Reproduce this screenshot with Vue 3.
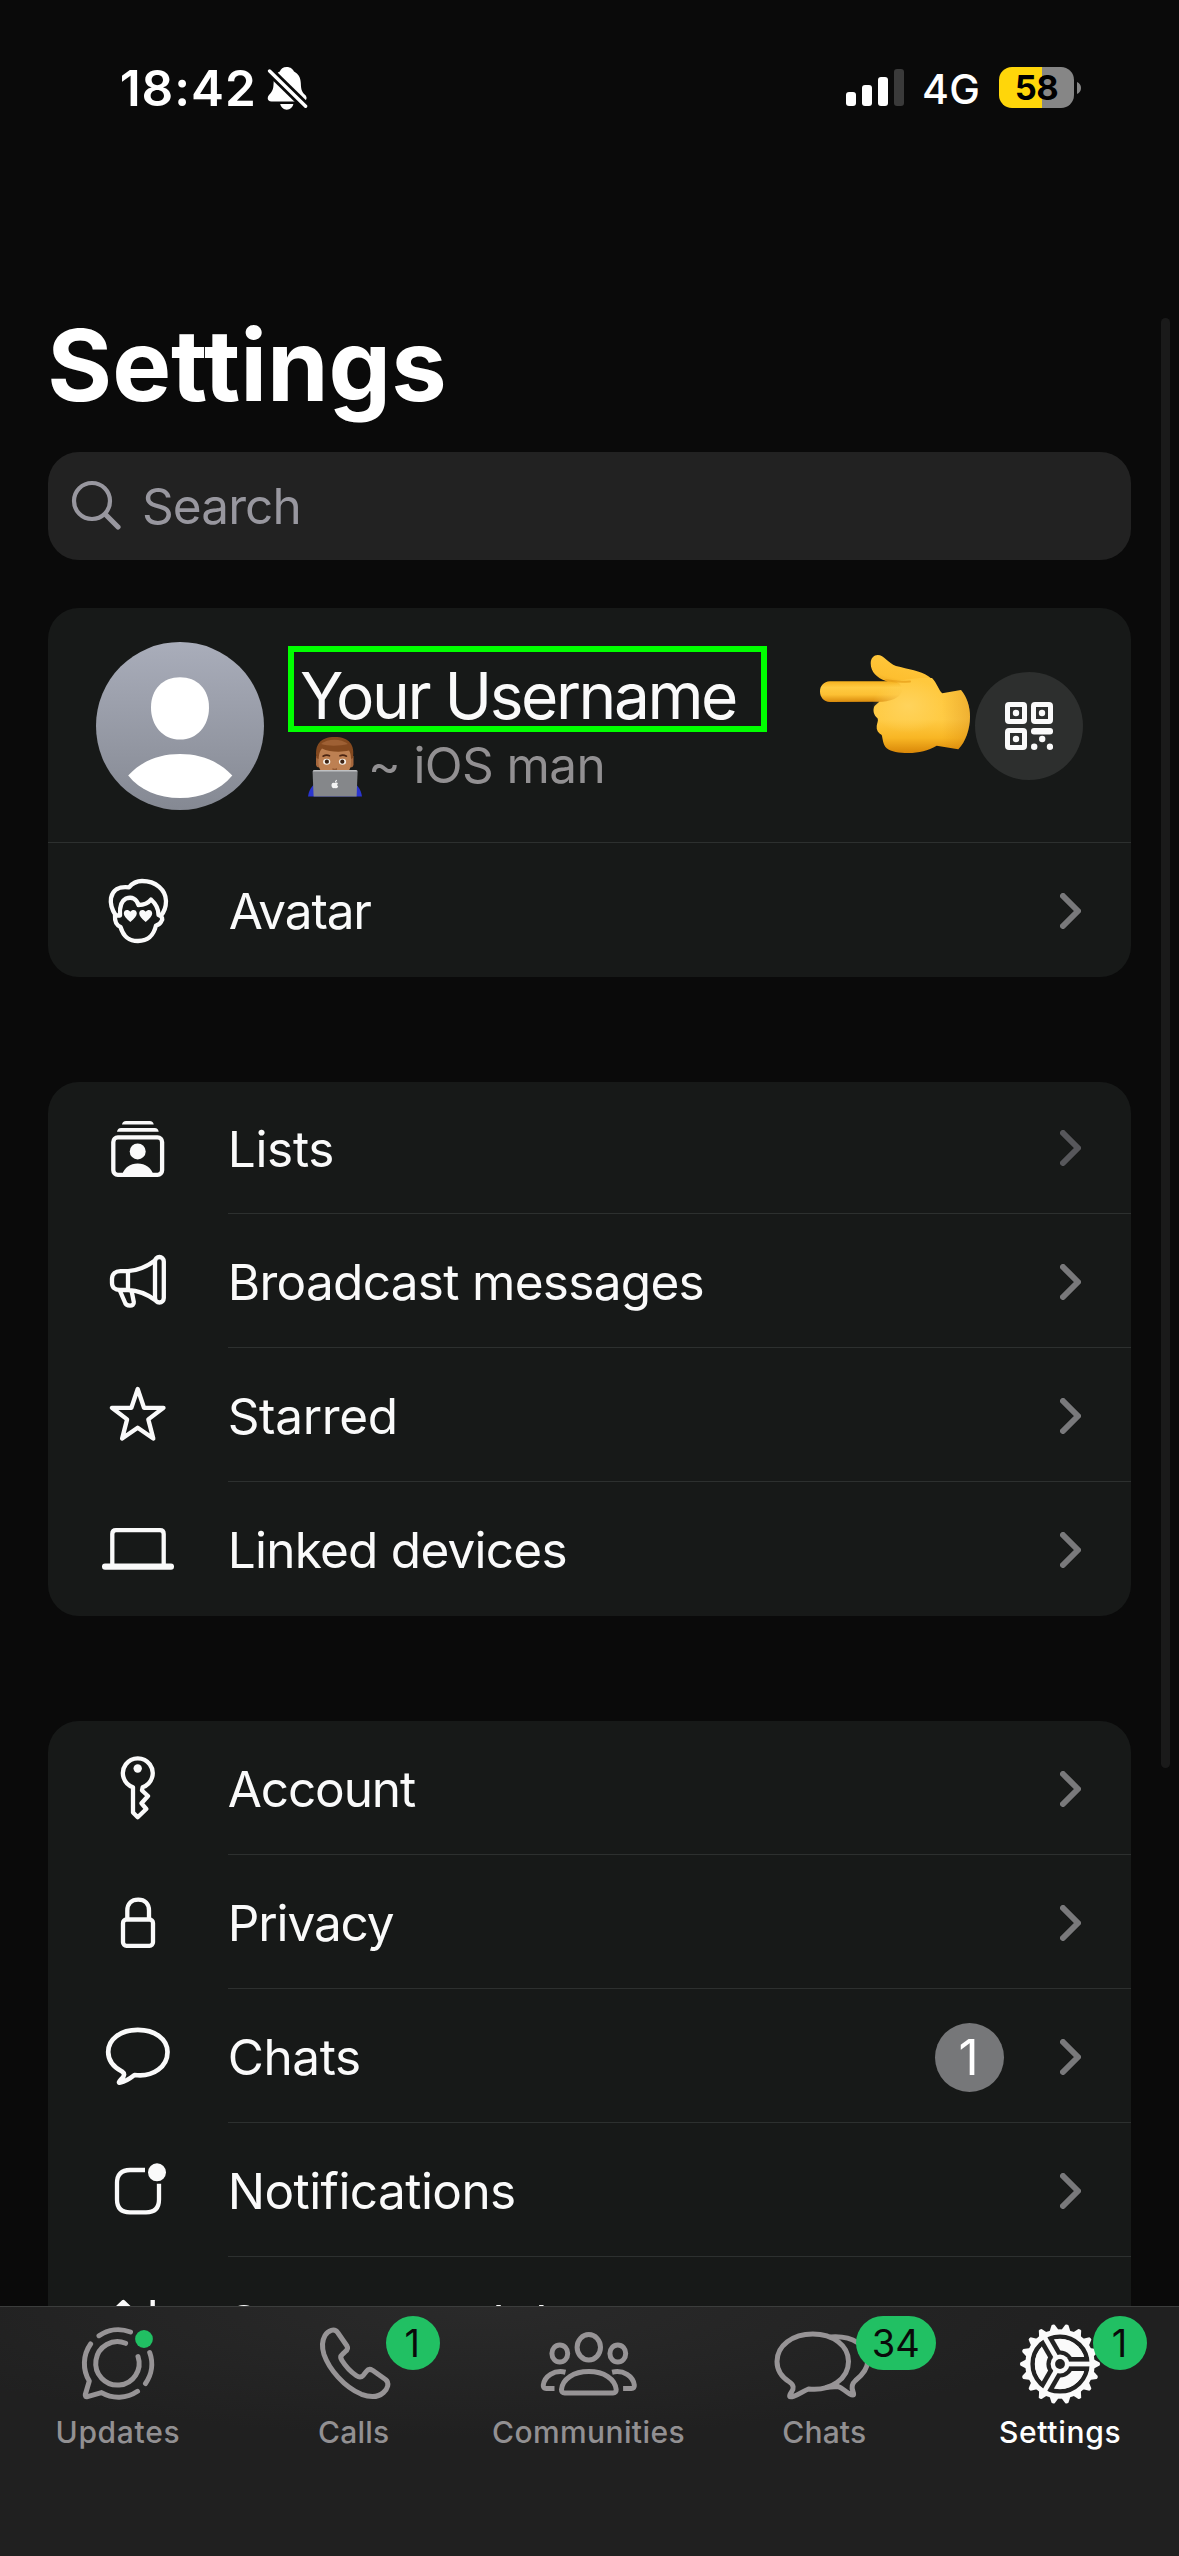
<script setup>
const groups = [
  [
    { id: 'lists', label: 'Lists', track: -0.3, dim: true },
    { id: 'broadcast', label: 'Broadcast messages', track: -0.7 },
    { id: 'starred', label: 'Starred', track: -0.35 },
    { id: 'devices', label: 'Linked devices', track: -0.75 },
  ],
  [
    { id: 'account', label: 'Account', track: -1.1 },
    { id: 'privacy', label: 'Privacy', track: -1.1 },
    { id: 'chats', label: 'Chats', track: -0.41, badge: '1' },
    { id: 'notifications', label: 'Notifications', track: -0.56 },
    { id: 'storage', label: 'Storage and data', track: -0.72 },
  ],
]

const tabs = [
  { id: 'updates', label: 'Updates', track: 0.68 },
  { id: 'calls', label: 'Calls', track: 0.2 },
  { id: 'communities', label: 'Communities', track: 0.39 },
  { id: 'chats', label: 'Chats', track: 0.15, badge: '34' },
  { id: 'settings', label: 'Settings', track: 0.68, badge: '1', active: true },
]
tabs[1].badge = '1'

const signal = [14, 21, 29, 37]
const teeth = Array.from({ length: 18 }, (_, i) => i * 20)
const spokes = [0, 120, 240]
</script>

<template>
  <div class="phone">
    <header class="status">
      <span class="time">18:42</span>
      <svg class="bell" width="41" height="45" viewBox="0 0 41 45">
        <path fill="#fff" d="M19.7 1C23.6 1 26.2 3.4 27 5.6C31.4 7.8 33.6 11.8 33.8 17C34 24.5 35.4 26.4 38 28.8C41 31.8 39.5 35.4 35.5 35.4H4.5C.6 35.4-.4 31.8 2 29C5.4 25.4 6.4 23.6 6.6 17C6.8 11.6 8.6 7.6 12.8 5.6C13.8 3 16 1 19.7 1Z" />
        <path fill="#fff" d="M13.2 38H26.4C25.6 41.4 23 43.7 19.8 43.7S14 41.4 13.2 38Z" />
        <path stroke="#0a0a0a" stroke-width="9" d="M-1 1.5L42 43.6" />
        <path stroke="#fff" stroke-width="3.4" stroke-linecap="round" d="M2.6 5L38.6 40.3" />
      </svg>
      <div class="signal">
        <i v-for="(h, i) in signal" :key="i" :class="{ off: i === 3 }" :style="{ height: h + 'px' }"></i>
      </div>
      <span class="net">4G</span>
      <div class="battery"><span>58</span></div>
      <svg class="nub" width="4" height="12" viewBox="0 0 4 12"><path fill="#868686" d="M0 0C2.6 1 4 3.4 4 6S2.6 11 0 12Z" /></svg>
    </header>

    <main>
      <h1>Settings</h1>

      <div class="search">
        <svg width="50" height="50" viewBox="0 0 50 50" fill="none" stroke="#98979f" stroke-linecap="round">
          <circle cx="21" cy="21" r="18" stroke-width="4.2" />
          <path stroke-width="5.2" d="M34.5 34.5L47 47" />
        </svg>
        <span>Search</span>
      </div>

      <section class="card first">
        <div class="profile">
          <svg class="photo" width="168" height="168" viewBox="0 0 168 168">
            <defs>
              <linearGradient id="photoBg" x1="0" y1="0" x2="0" y2="1">
                <stop offset="0" stop-color="#a9adba" />
                <stop offset="1" stop-color="#858993" />
              </linearGradient>
            </defs>
            <circle cx="84" cy="84" r="84" fill="url(#photoBg)" />
            <path fill="#fff" d="M84 35.3C101 35.3 113 47 113 65.5C113 84 101 97.6 84 97.6S55 84 55 65.5C55 47 67 35.3 84 35.3Z" />
            <path fill="#fff" d="M32.2 133.5C46 118.5 64 112 84 112S122 118.5 136.3 133.5C124 148 106 156 84 156S44 148 32.2 133.5Z" />
          </svg>

          <div class="info">
            <div class="name">Your Username</div>
            <div class="about">
              <svg width="56" height="61" viewBox="0 0 56 61">
                <path fill="#2a35cf" d="M1 60.5C2 54 4.5 50 9 47H47C51.5 50 54 54 55 60.5Z" />
                <path fill="#a5673c" d="M9 20H46.500V29Q46 31.500 43.500 31.500H12Q9.500 31.500 9 29Z" />
                <path fill="#bd8052" d="M11.500 12H44V27C44 36 37 41 27.700 41S11.500 36 11.500 27Z" />
                <path fill="#84491f" d="M9.500 22C7.500 9 13 1 27.700 1S48 9 46 22L44 23C43.900 19 43.500 17 42 14.500C34 16.500 22 16 15 12.500C12.800 15 12 17.500 11.600 23Z" />
                <path fill="#9e6034" d="M14 8C20 2.500 34 2 41 8C33 10 22 10.500 14 8Z" />
                <path fill="none" stroke="#4a2412" stroke-width="1.600" stroke-linecap="round" d="M16 20.200Q19.500 18.200 22.500 19.800M33 19.800Q36 18.200 39.500 20.200" />
                <ellipse cx="19.700" cy="25.700" rx="3.600" ry="3" fill="#f6f1ea" /><ellipse cx="35.500" cy="25.700" rx="3.600" ry="3" fill="#f6f1ea" />
                <circle cx="19.900" cy="25.700" r="2.100" fill="#3b2212" /><circle cx="35.300" cy="25.700" r="2.100" fill="#3b2212" />
                <path fill="#945a33" d="M25.500 32Q27.700 33.500 30 32V35H25.500Z" />
                <path fill="#85878a" d="M5.600 36Q5.600 34 7.600 34H48.600Q50.600 34 50.600 36L49.600 60.500H6.600Z" />
                <path fill="#bfc1c3" d="M5.600 35.500Q5.600 34 7.600 34H48.600Q50.600 34 50.600 35.500Z" />
                <path fill="#f4f4f4" d="M28 46.2C28 44.7 28.9 43.9 30 43.7C30 45.2 29.2 46 28 46.2ZM27.800 47C29 46.400 30.200 46.400 31 47.300C29.800 48.200 30 49.800 31.200 50.500C30.400 52.500 29.300 52.400 27.800 51.900C26.300 52.500 25.200 52 24.700 50.500C24 48.300 25 46 27.800 47Z" />
              </svg>
              <span>~ iOS man</span>
            </div>
          </div>

          <svg class="hand" width="151" height="106" viewBox="0 0 151 106">
            <defs>
              <linearGradient id="skin" x1="0" y1="0" x2="0" y2="1">
                <stop offset="0" stop-color="#ffc83d" />
                <stop offset=".55" stop-color="#ffcb45" />
                <stop offset=".8" stop-color="#f8b624" />
                <stop offset="1" stop-color="#d98708" />
              </linearGradient>
              <linearGradient id="finger" x1="0" y1="0" x2="0" y2="1">
                <stop offset="0" stop-color="#f5b11f" />
                <stop offset=".3" stop-color="#ffcb42" />
                <stop offset=".65" stop-color="#fcc033" />
                <stop offset="1" stop-color="#d98a0c" />
              </linearGradient>
              <linearGradient id="thumb" x1=".7" y1="0" x2=".3" y2="1">
                <stop offset="0" stop-color="#ffc93f" />
                <stop offset=".6" stop-color="#fdbf30" />
                <stop offset="1" stop-color="#d98a0c" />
              </linearGradient>
              <radialGradient id="palm">
                <stop offset="0" stop-color="#ffd35c" />
                <stop offset="1" stop-color="#ffd35c" stop-opacity="0" />
              </radialGradient>
              <linearGradient id="cuff" x1="0" y1="0" x2="1" y2="0">
                <stop offset="0" stop-color="#c97408" stop-opacity="0" />
                <stop offset="1" stop-color="#c97408" stop-opacity=".3" />
              </linearGradient>
            </defs>
            <path fill="url(#thumb)" d="M57.7 5C64 5 68 13 76 16C88 19 101 21 108 26C114 30 116 35 119 40L96 46L66 31C57 28 50.7 22 50.7 13.3C50.7 8 54 5 57.7 5Z" />
            <path fill="url(#skin)" d="M58 33L100 28L112 28C117 33 118.5 40 122.3 43.3L141 40C147 47 150 57 150 66.7C150 79 145.5 92 138.3 99.3L116.7 95.7C108 100.5 99 103 88.3 103C79 103 71 102 66.7 98.3C62.5 94 63 89 61.7 85C58 83 56.2 80 56.7 76C57 73 58.5 71 57.7 68.5C53.5 65 52.5 60 54.5 56L59.3 51.7Z" />
            <path fill="url(#finger)" d="M10 31.3H72C86 31 88 50 62 51.8L10 52C3.5 51.5 0 47 0 41.5S3.5 31.8 10 31.3Z" />
            <ellipse cx="88" cy="56" rx="36" ry="27" fill="url(#palm)" />
            <path fill="url(#cuff)" d="M122.3 43.3L141 40C147 47 150 57 150 66.7C150 79 145.5 92 138.3 99.3L122 96.5Z" />
            <path fill="none" stroke="#e39a14" stroke-width="2" stroke-linecap="round" opacity=".65" d="M66 30Q76 32.5 90 31.5" />
          </svg>

          <div class="qr">
            <svg width="48" height="48" viewBox="0 0 48 48" fill="#fafafa">
              <g fill="none" stroke="#fafafa" stroke-width="5">
                <rect x="2.5" y="2.5" width="17" height="17" rx="1.5" />
                <rect x="28.5" y="2.5" width="17" height="17" rx="1.5" />
                <rect x="2.5" y="28.5" width="17" height="17" rx="1.5" />
              </g>
              <circle cx="11" cy="11" r="3.2" /><circle cx="37" cy="11" r="3.2" /><circle cx="11" cy="37" r="3.2" />
              <rect x="26" y="26" width="22" height="6.5" rx="3" />
              <circle cx="37.2" cy="37" r="3.2" /><circle cx="29.2" cy="44.8" r="3.2" /><circle cx="45" cy="44.8" r="3.2" />
            </svg>
          </div>
        </div>

        <div class="row">
          <svg class="icon" width="80" height="80" viewBox="0 0 80 80">
            <path d="M17.8 45.5C13.5 39 12.2 33 13 28C14.5 20 21 16 31 17.3C35 12.5 39 11 44 11C58 11 67.8 20 68 31C68 37 66 42 63 45.5" />
            <path d="M22 45C21.5 37 23 31 28 28.5C34 26.5 38.5 28.5 40.5 35C46 35 50 33.5 53 29.5C57 33 60.5 38 60.5 45C64.5 46.5 65 49 63.5 51C62.5 53.5 60 55 58 55.5C56 63.5 52 71 40 71S24.5 63.5 22.5 57C19 55.5 16.500 53 17 45.500H22Z" />
            <path class="solid" d="M32.3 52C28 48.5 25.8 46 25.8 43.3C25.8 39.5 30.3 38.8 32.3 41.8C34.3 38.8 38.8 39.5 38.8 43.3C38.8 46 36.6 48.5 32.3 52ZM47.7 52C43.4 48.5 41.2 46 41.2 43.3C41.2 39.5 45.7 38.8 47.7 41.8C49.7 38.8 54.2 39.5 54.2 43.3C54.2 46 52 48.5 47.7 52Z" />
          </svg>
          <div class="body">
            <span class="label avatar-label">Avatar</span>
            <svg class="chev" width="21" height="36" viewBox="0 0 21 36"><path d="M3 3L18 18L3 33" /></svg>
          </div>
        </div>
      </section>

      <section v-for="(rows, g) in groups" :key="g" class="card" :class="'group' + g">
        <div v-for="r in rows" :key="r.id" class="row" :class="r.id">
          <svg class="icon" width="80" height="80" viewBox="0 0 80 80">
            <template v-if="r.id === 'lists'">
              <path class="solid" d="M24 16.6Q24.5 13 28 13H51.7Q55.2 13 55.7 16.6ZM19 23.8Q19.5 20 23 20H56.7Q60.2 20 60.7 23.8Z" />
              <rect x="15.3" y="29.4" width="48.8" height="37.4" rx="4.5" />
              <circle class="solid" cx="39.7" cy="43.4" r="8" />
              <path class="solid" d="M24 67C26.5 59.5 32 55.6 39.7 55.6S53 59.5 55.5 67Z" />
            </template>
            <template v-else-if="r.id === 'broadcast'">
              <path d="M30 30.2H22.5C17 30.2 14 33 14 38V42C14 46.5 17 49 22 49H30ZM30 30.2C40 29.5 49 25.5 57 19.5M30 49C40 49.5 49 53 57 59" />
              <rect x="57" y="16" width="8.8" height="45.5" rx="4.4" />
              <path d="M22 50L27 61.5C28 65.5 36.5 66 35.8 61L33.6 50" />
            </template>
            <path v-else-if="r.id === 'starred'" d="M39.7 14L46 32.8H65.5L50.3 44.4L55.3 63.6L39.7 52.8L24.1 63.6L29.1 44.4L13.9 32.8H33.4Z" />
            <template v-else-if="r.id === 'devices'">
              <path d="M14.3 56V25Q14.3 21.2 18 21.2H62Q65.7 21.2 65.7 25V56" />
              <rect class="solid" x="4" y="54.6" width="72" height="6.2" rx="3" />
            </template>
            <template v-else-if="r.id === 'account'">
              <path d="M35 39.3A14.9 14.9 0 1 1 44.6 39.3L44 42.5L50 48L43.5 55.3L48.3 61L39.7 69.2L35 64.5Z" />
              <circle class="solid" cx="39.7" cy="20.5" r="4.2" />
            </template>
            <template v-else-if="r.id === 'privacy'">
              <rect x="25" y="37.5" width="30" height="26.3" rx="3.5" />
              <path d="M29.3 37V28.5C29.3 21.5 33.5 17.6 40.2 17.6S51 21.5 51 28.5V37" />
            </template>
            <path v-else-if="r.id === 'chats'" class="thick" d="M36.5 59C56 61.5 69.5 50 69.5 36C69.5 23 57 13.9 39.8 13.9S10.2 23 10.2 36C10.2 45 15.5 51 24 55.5C27 57.5 26.5 60 23.5 63C21 66 20 67 22.5 66.5C28 65.5 32 62.5 36.5 59Z" />
            <template v-else-if="r.id === 'notifications'">
              <path d="M47 20H32Q19 20 19 33V49.5Q19 62.4 32 62.4H48Q61 62.4 61 49.5V33.7" />
              <circle class="solid" cx="59" cy="22.3" r="9" />
            </template>
            <path v-else d="M17 26L25.3 18L33.5 26M25.3 19V62M46.5 54L54.7 62L63 54M54.7 16V61" />
          </svg>
          <div class="body">
            <span class="label" :style="{ letterSpacing: r.track + 'px' }">{{ r.label }}</span>
            <span v-if="r.badge" class="count">{{ r.badge }}</span>
            <svg class="chev" :class="{ dim: r.dim }" width="21" height="36" viewBox="0 0 21 36"><path d="M3 3L18 18L3 33" /></svg>
          </div>
        </div>
      </section>
    </main>

    <nav class="tabs">
      <div v-for="t in tabs" :key="t.id" class="tab" :class="{ active: t.active }">
        <div class="glyph">
          <svg width="120" height="90" viewBox="0 0 120 90">
            <template v-if="t.id === 'updates'">
              <path d="M41 15.7A33.7 33.7 0 0 1 72.5 12M32.6 24A33.7 33.7 0 0 0 31.3 61L27.3 74.5Q26.8 77.3 29.5 76.6L43.5 72.6A33.7 33.7 0 0 0 79.5 71.3M91.7 32.5A33.7 33.7 0 0 1 87.5 63.5" />
              <path d="M67.6 23.3A21.7 21.7 0 1 0 80 36.5" />
              <circle cx="86" cy="19" r="8.9" class="dot" />
            </template>
            <path v-else-if="t.id === 'calls'" d="M31 15.5C34 10.5 40.5 7.5 44 13L53 26C54.5 28.5 53 30.3 51 31.8L48.3 34.3C46.3 36 46.6 38.5 48 40.5C52 47 57 52 62.5 55.8C65 57.5 67.5 57.3 69.3 55.3L72.5 51.3C74 49.3 76.3 49 78.5 50.3L91.5 59.5C96 63 93.5 69 89.5 72.5C84 77.5 75.5 77.3 67.5 74.3C50 67 35 49 30 34.5C27.8 27.5 27.8 21 31 15.5Z" />
            <template v-else-if="t.id === 'communities'">
              <ellipse cx="59.8" cy="27.3" rx="11.7" ry="12.7" />
              <ellipse cx="30.8" cy="33.5" rx="7.9" ry="8.6" />
              <ellipse cx="88.8" cy="33.5" rx="7.9" ry="8.6" />
              <path d="M32.5 69.5C33.5 59 44.5 51.5 59.8 51.5S86 59 87.2 69.5Q87.3 72.9 84 72.9H35.7Q32.4 72.9 32.5 69.5Z" />
              <path class="butt" d="M36.5 52.2C25 49.5 15.5 56.5 14.3 65Q14 68.4 17.2 68.4H25.5M83.1 52.2C94.6 49.5 104.1 56.5 105.3 65Q105.6 68.4 102.4 68.4H94.1" />
            </template>
            <template v-else-if="t.id === 'chats'">
              <path d="M66 17C88 15.5 102.8 26 102.8 40C102.8 49 97.5 55 90.5 60.5C86 64.5 86.5 68 88 71.5C89.3 75 89 76.3 84.5 73.8C79.5 71 77 67.5 73 66.5L62 67.3" />
              <path d="M43.5 69C66 71.5 83.5 58.5 83.5 41.5C83.5 25.5 68 14 47.8 14S12 25.5 12 41.5C12 50 16.5 57 24.5 62C29 65 29 68.5 26.5 72C23.5 76.5 24 77.6 28.5 76.3C34.5 74.5 38 71 43.5 69Z" />
            </template>
            <g v-else class="gear" transform="translate(59 44)">
              <path v-for="a in teeth" :key="a" :transform="`rotate(${a})`" d="M33 -5L39.6 -1.6Q40.6 0 39.6 1.6L33 5Z" />
              <circle r="34.8" />
              <circle r="27.3" class="gap" />
              <circle r="25.2" />
              <circle r="13.6" class="hole" />
              <path v-for="s in spokes" :key="s" :transform="`rotate(${s})`" class="hole" d="M0 -7H28.5V7H0Z" />
              <path v-for="s in spokes" :key="'w' + s" :transform="`rotate(${s})`" d="M0 -2.4H31V2.4H0Z" />
              <circle r="9.4" />
              <circle r="4.9" class="hole" />
            </g>
          </svg>
          <span v-if="t.badge" class="badge" :class="t.id">{{ t.badge }}</span>
        </div>
        <span class="tab-label" :style="{ letterSpacing: t.track + 'px' }">{{ t.label }}</span>
      </div>
    </nav>

    <div class="scrollbar"></div>
  </div>
</template>

<style>
body {
  margin: 0;
  background: #0a0a0a;
}
</style>

<style scoped>
.phone {
  position: relative;
  display: flex;
  flex-direction: column;
  width: 1179px;
  height: 2556px;
  overflow: hidden;
  background: #0a0a0a;
  color: #fafafa;
  font-family: Inter, "Liberation Sans", sans-serif;
  box-sizing: border-box;
}
.phone svg {
  display: block;
  flex: none;
}
.status {
  flex: none;
  display: flex;
  align-items: center;
  height: 176px;
  padding: 0 98px 0 119.7px;
  box-sizing: border-box;
  color: #fff;
}
.time {
  width: 147.3px;
  font-size: 49.5px;
  font-weight: 600;
  letter-spacing: 0.98px;
}
.bell {
  margin-top: 1px;
}
.signal {
  display: flex;
  align-items: flex-end;
  gap: 6px;
  height: 37px;
  margin: 0 18px 1px auto;
}
.signal i {
  width: 10px;
  border-radius: 3px;
  background: #fff;
}
.signal .off {
  background: #3a3a3a;
}
.net {
  width: 77px;
  padding-top: 2px;
  font-size: 41px;
  font-weight: 500;
  letter-spacing: 0.4px;
}
.battery {
  display: flex;
  align-items: center;
  justify-content: center;
  width: 75px;
  height: 41px;
  margin: 0 3px 1px 0;
  border-radius: 13px;
  background: linear-gradient(90deg, #ffd60a 43px, #868686 43px);
  color: #000;
  font-size: 34.5px;
  font-weight: 700;
  letter-spacing: -0.6px;
}
.nub {
  margin-bottom: 1px;
}
main {
  flex: 1;
  min-height: 0;
  overflow: hidden;
  padding: 0 48px;
}
h1 {
  margin: 129px 0 27px -0.7px;
  color: #fff;
  font-size: 99px;
  font-weight: 700;
  line-height: 120px;
}
.search {
  display: flex;
  align-items: center;
  gap: 21px;
  height: 108px;
  padding-left: 23px;
  box-sizing: border-box;
  border-radius: 31px;
  background: #222;
  color: #98979f;
  font-size: 49.5px;
  letter-spacing: -0.9px;
}
.search svg {
  margin-bottom: 2px;
}
.card {
  border-radius: 31px;
  background: #171918;
}
.first {
  margin-top: 48px;
}
.group0,
.group1 {
  margin-top: 105px;
}
.profile {
  display: flex;
  align-items: flex-start;
  height: 235px;
  padding: 34px 48px 0;
  box-sizing: border-box;
  border-bottom: 1px solid #2d302f;
}
.info {
  margin: 4px 0 0 24px;
}
.name {
  width: 479px;
  height: 86px;
  padding: 14px 0 0 6px;
  box-sizing: border-box;
  border: 6px solid #00ff00;
  font-size: 64px;
  line-height: 60px;
  letter-spacing: -2.45px;
  white-space: nowrap;
}
.about {
  display: flex;
  align-items: center;
  gap: 5px;
  height: 61px;
  margin: 4px 0 0 19px;
  color: #929092;
  font-size: 49.5px;
  letter-spacing: -0.62px;
}
.about span {
  padding-bottom: 3px;
}
.hand {
  margin: 8px 4px 0 auto;
}
.qr {
  display: flex;
  align-items: center;
  justify-content: center;
  width: 108px;
  height: 108px;
  margin-top: 30px;
  border-radius: 50%;
  background: #2d2f2e;
}
.row {
  display: flex;
  align-items: center;
  height: 134px;
  padding-left: 50px;
  box-sizing: border-box;
}
.group0 .row:first-child {
  height: 132px;
}
.icon {
  margin-right: 50px;
  fill: none;
  stroke: #fafafa;
  stroke-width: 4.3;
  stroke-linejoin: round;
  stroke-linecap: butt;
}
.icon .solid {
  fill: #fafafa;
  stroke: none;
}
.icon .thick {
  stroke-width: 4.7;
}
.body {
  flex: 1;
  display: flex;
  align-items: center;
  height: 100%;
  margin-left: -0.3px;
  padding: 1px 50px 0 0;
  box-sizing: border-box;
}
.row:not(:last-child) .body {
  border-bottom: 1px solid #2d302f;
}
.label {
  flex: 1;
  padding-top: 1px;
  font-size: 49.5px;
  white-space: nowrap;
}
.storage .label {
  padding: 0 0 4px;
}
.avatar-label {
  padding-left: 1px;
  letter-spacing: -1.15px;
}
.chev {
  margin-top: 1px;
  fill: none;
  stroke: #79797b;
  stroke-width: 6;
  stroke-linecap: round;
  stroke-linejoin: round;
}
.lists .chev {
  margin-top: 0;
}
.chev.dim {
  stroke: #57575b;
}
.count {
  display: flex;
  align-items: center;
  justify-content: center;
  width: 69px;
  height: 69px;
  margin: 2px 56px 0 0;
  padding-right: 2px;
  box-sizing: border-box;
  border-radius: 50%;
  background: #767779;
  color: #fff;
  font-size: 49.5px;
}
.tabs {
  flex: none;
  display: flex;
  height: 250px;
  box-sizing: border-box;
  border-top: 1px solid #3b3d3c;
  background: radial-gradient(ellipse 620px 130px at 480px 0, #2a2a2a, transparent), #202020;
}
.tab {
  flex: 1 1 0;
  display: flex;
  flex-direction: column;
  align-items: center;
  padding-top: 13px;
  color: #929092;
}
.tab.active {
  color: #fff;
}
.glyph {
  position: relative;
}
.glyph svg {
  fill: none;
  stroke: #979496;
  stroke-width: 5;
  stroke-linecap: round;
  stroke-linejoin: round;
}
.glyph .butt {
  stroke-linecap: butt;
}
.glyph .dot {
  fill: #21c063;
  stroke: none;
}
.glyph .gear {
  fill: #fafafa;
  stroke: none;
}
.gear .gap {
  fill: none;
  stroke: #222;
  stroke-width: 4.6;
}
.gear .hole {
  fill: #222;
}
.badge {
  position: absolute;
  top: -4px;
  left: 92px;
  display: flex;
  align-items: center;
  justify-content: center;
  height: 54px;
  width: 54px;
  padding: 0 1px 1px 0;
  box-sizing: border-box;
  border-radius: 27px;
  background: #21c063;
  color: #0a0a0a;
  font-size: 38px;
}
.badge.chats {
  left: 91px;
  width: 80px;
  letter-spacing: 0;
}
.tab-label {
  margin-top: 4px;
  font-size: 30px;
  font-weight: 500;
  line-height: 36px;
}
.tab:nth-child(n + 3) .tab-label {
  margin-right: 2px;
}
.scrollbar {
  position: absolute;
  top: 318px;
  right: 9px;
  width: 9px;
  height: 1450px;
  border-radius: 5px;
  background: #1a1a1a;
}
</style>
